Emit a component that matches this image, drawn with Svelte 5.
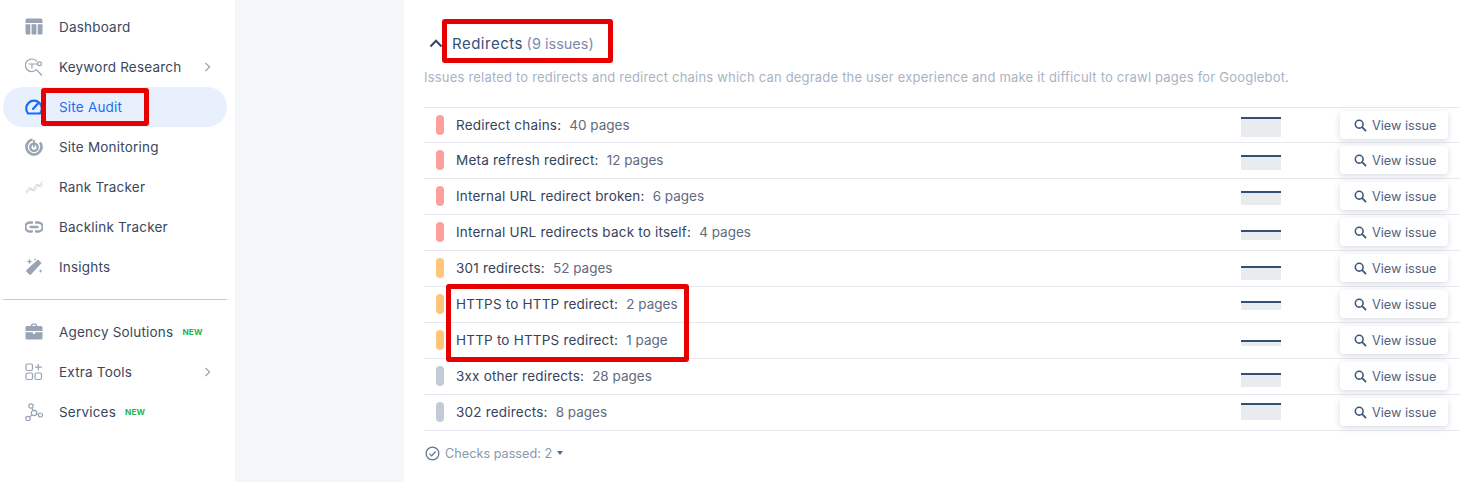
<script lang="ts">
  const topNav = [
    { name: "Dashboard", icon: "dashboard" },
    { name: "Keyword Research", icon: "keyword", more: true },
    { name: "Site Audit", icon: "audit", active: true },
    { name: "Site Monitoring", icon: "monitor" },
    { name: "Rank Tracker", icon: "rank" },
    { name: "Backlink Tracker", icon: "link" },
    { name: "Insights", icon: "wand" },
  ];
  const bottomNav = [
    { name: "Agency Solutions", icon: "case", isNew: true },
    { name: "Extra Tools", icon: "tools", more: true },
    { name: "Services", icon: "nodes", isNew: true },
  ];

  // top / height of the little trend block are relative to the row
  const issues = [
    { label: "Redirect chains:", count: "40 pages", level: "red", top: 9, h: 20 },
    { label: "Meta refresh redirect:", count: "12 pages", level: "red", top: 12, h: 15 },
    { label: "Internal URL redirect broken:", count: "6 pages", level: "red", top: 12, h: 14 },
    { label: "Internal URL redirects back to itself:", count: "4 pages", level: "red", top: 15, h: 10 },
    { label: "301 redirects:", count: "52 pages", level: "orange", top: 15, h: 14 },
    { label: "HTTPS to HTTP redirect:", count: "2 pages", level: "orange", top: 14, h: 9 },
    { label: "HTTP to HTTPS redirect:", count: "1 page", level: "orange", top: 17, h: 6 },
    { label: "3xx other redirects:", count: "28 pages", level: "gray", top: 14, h: 14 },
    { label: "302 redirects:", count: "8 pages", level: "gray", top: 8, h: 17 },
  ];
</script>

{#snippet navIcon(kind: string)}
  <svg class="nav-icon" viewBox="0 0 18 18" width="18" height="18" aria-hidden="true">
    {#if kind === "dashboard"}
      <path fill="currentColor" d="M2 0.5h14a1.5 1.5 0 0 1 1.5 1.5v3H0.5V2A1.5 1.5 0 0 1 2 0.5ZM0.5 6.3h4.8v10.2H2A1.5 1.5 0 0 1 0.5 15ZM6.6 6.3h4.8v10.2H6.6ZM12.7 6.3h4.8V15a1.5 1.5 0 0 1-1.5 1.5h-3.3Z" />
    {:else if kind === "keyword"}
      <g fill="none" stroke="currentColor" stroke-width="1.2" stroke-linecap="round">
        <path d="M11.5 3.2A6.3 6.3 0 1 0 11.3 11.6L16.5 17" />
        <path d="M4 6h8M7 6v4" />
        <circle cx="14.5" cy="5.8" r="1.9" />
      </g>
    {:else if kind === "audit"}
      <g fill="none" stroke="currentColor" stroke-width="2.2" stroke-linecap="round" stroke-linejoin="round">
        <path d="M3 15.5A7.8 7.8 0 1 1 15 15.5Z" />
        <path d="M8 11l4.500-5" />
      </g>
    {:else if kind === "monitor"}
      <g fill="none" stroke="currentColor">
        <path stroke-width="2.600" d="M7.500 1.600A7.500 7.500 0 1 0 15 4.500" />
        <circle cx="9" cy="9.300" r="3.700" stroke-width="2.400" />
        <path stroke-width="1.800" d="M9 9.300V2" />
      </g>
    {:else if kind === "rank"}
      <g class="rank-lines" fill="none" stroke="currentColor" stroke-width="0.900" stroke-linejoin="round">
        <path d="M0.500 14l4-4.500 3.500 2 4-5.500 2.500 1.500 3-4" />
        <path d="M1.500 15.500l4-4.500 3.500 2 4-5.500 2.500 1.500 2-3" />
      </g>
    {:else if kind === "link"}
      <g fill="none" stroke="currentColor" stroke-width="2.300" stroke-linecap="round">
        <path d="M7 4.500H4.800a4.500 4.500 0 0 0 0 9H7M11 4.500h2.200a4.500 4.500 0 0 1 0 9H11M5.500 9h7" />
      </g>
    {:else if kind === "wand"}
      <path fill="currentColor" d="M13 1.500l3.600 3.600L6 16.500a1.200 1.200 0 0 1-1.700 0l-2.800-2.800a1.200 1.200 0 0 1 0-1.700ZM4.500 .5l.8 2.200 2.200.8-2.200.8-.8 2.200-.8-2.200L1.500 3.500l2.200-.8ZM10 0l.4 1 1 .4-1 .4-.4 1-.4-1-1-.4 1-.4ZM15.500 11l.6 1.400 1.400.6-1.400.6-.6 1.400-.6-1.400-1.400-.6 1.400-.6Z" />
    {:else if kind === "case"}
      <path fill="currentColor" d="M6 3V2a1.500 1.500 0 0 1 1.500-1.500h3A1.500 1.500 0 0 1 12 2v1h4a1.500 1.500 0 0 1 1.500 1.500V8H0.500V4.500A1.500 1.500 0 0 1 2 3ZM7.300 3h3.400V1.800H7.300ZM0.500 9.300H8V11h2V9.300h7.500V15a1.500 1.500 0 0 1-1.500 1.500H2A1.500 1.500 0 0 1 0.500 15Z" />
    {:else if kind === "tools"}
      <g fill="none" stroke="currentColor" stroke-width="1.200">
        <rect x="1" y="1" width="6.500" height="6.500" rx="1.500" />
        <rect x="1" y="10" width="6.500" height="6.500" rx="1.500" />
        <rect x="10" y="10" width="6.500" height="6.500" rx="1.500" />
        <path d="M13.300 1v6.500M10 4.200h6.800" />
      </g>
    {:else}
      <g fill="none" stroke="currentColor" stroke-width="1.200">
        <circle cx="6" cy="3" r="2.200" />
        <circle cx="9" cy="10" r="2.700" />
        <circle cx="15.500" cy="12" r="2" />
        <circle cx="3" cy="15.500" r="2.200" />
        <path d="M7 5l1 2.400M11.600 10.800l2 .6M7 12l-2.500 2" />
      </g>
    {/if}
  </svg>
{/snippet}

{#snippet navRow(item: any)}
  <a class="nav-item" class:active={item.active} href="#top">
    {@render navIcon(item.icon)}
    <span class="nav-name">{item.name}</span>
    {#if item.isNew}<span class="new-tag">NEW</span>{/if}
    {#if item.more}
      <svg class="chevron" viewBox="0 0 8 12" width="7" height="10" aria-hidden="true">
        <path d="M1.500 1l5 5-5 5" fill="none" stroke="currentColor" stroke-width="1.300" />
      </svg>
    {/if}
  </a>
{/snippet}

<div class="shell">
  <aside class="sidebar">
    <nav class="nav-group">
      {#each topNav as item}
        {@render navRow(item)}
      {/each}
    </nav>
    <hr class="divider" />
    <nav class="nav-group">
      {#each bottomNav as item}
        {@render navRow(item)}
      {/each}
    </nav>
  </aside>

  <div class="gutter"></div>

  <main class="panel">
    <header class="section-head">
      <svg class="collapse" viewBox="0 0 14 9" width="14" height="9" aria-hidden="true">
        <path d="M1.500 7.500L7 1.800l5.500 5.700" fill="none" stroke="#2f4a6d" stroke-width="2" />
      </svg>
      <h2>Redirects <span>(9 issues)</span></h2>
    </header>
    <p class="section-desc">
      Issues related to redirects and redirect chains which can degrade the user experience and make it difficult to crawl pages for Googlebot.
    </p>

    <ul class="issues">
      {#each issues as issue}
        <li class="issue">
          <span class="level {issue.level}"></span>
          <span class="issue-label">{issue.label}</span>
          <span class="issue-count">{issue.count}</span>
          <span class="trend" style="margin-top: {issue.top}px; height: {issue.h}px"></span>
          <button type="button" class="view-btn">
            <svg viewBox="0 0 14 14" width="13" height="13" aria-hidden="true">
              <circle cx="5.600" cy="5.600" r="4.200" fill="none" stroke="currentColor" stroke-width="1.700" />
              <path d="M8.800 8.800L13 13" stroke="currentColor" stroke-width="1.900" />
            </svg>
            View issue
          </button>
        </li>
      {/each}
    </ul>

    <div class="checks">
      <svg viewBox="0 0 16 16" width="15" height="15" aria-hidden="true">
        <circle cx="8" cy="8" r="6.800" fill="none" stroke="#5f7291" stroke-width="1.300" />
        <path d="M4.800 8.200l2.300 2.300 4.200-4.600" fill="none" stroke="#5f7291" stroke-width="1.300" />
      </svg>
      <span>Checks passed: 2</span>
      <i class="caret"></i>
    </div>

    <div class="mark mark-title"></div>
    <div class="mark mark-rows"></div>
  </main>

  <div class="mark mark-nav"></div>
</div>

<style>
  :global(body) {
    margin: 0;
    background: #fff;
  }

  .shell {
    position: relative;
    display: flex;
    height: 482px;
    font-family: Inter, "Noto Sans", sans-serif;
    font-size: 13.500px;
    letter-spacing: 0.200px;
    color: #36435a;
    overflow: hidden;
  }

  .sidebar {
    width: 235px;
    flex-shrink: 0;
    box-sizing: border-box;
    padding: 7px 8px 0 3px;
    background: #fff;
  }

  .nav-group {
    display: flex;
    flex-direction: column;
  }

  .nav-item {
    display: flex;
    align-items: center;
    height: 40px;
    padding-left: 22px;
    padding-right: 16px;
    border-radius: 20px;
    color: #3b475c;
    text-decoration: none;
  }

  .nav-item.active {
    background: #e8f0fd;
    color: #1a6cf5;
  }

  .nav-icon {
    flex-shrink: 0;
    margin-right: 16px;
    color: #98a3b3;
  }

  .rank-lines {
    color: #c6ccd5;
  }

  .nav-item.active .nav-icon {
    color: #1a6cf5;
  }

  .chevron {
    margin-left: auto;
    color: #8f9aab;
  }

  .new-tag {
    margin-left: 9px;
    font-size: 8.200px;
    font-weight: 700;
    color: #1fb54a;
  }

  .divider {
    margin: 12px 0 12px;
    border: none;
    border-top: 1px solid #c6ccd6;
  }

  .gutter {
    width: 169px;
    flex-shrink: 0;
    background: #f4f6fa;
  }

  .panel {
    position: relative;
    flex: 1;
    min-width: 0;
    padding: 0 16px 0 20px;
    background: #fff;
  }

  .section-head {
    display: flex;
    align-items: center;
    height: 32px;
    margin-top: 27px;
    padding-left: 5px;
  }

  .section-head h2 {
    margin: 0 0 0 9px;
    font-size: 15px;
    font-weight: 400;
    letter-spacing: 0.500px;
    color: #35507a;
  }

  .section-head h2 span {
    margin-left: -1px;
    font-size: 14.500px;
    letter-spacing: 0;
    color: #7d8aa8;
  }

  .section-desc {
    margin: 2px 0 0;
    height: 34px;
    line-height: 32px;
    font-size: 13px;
    color: #a9b3c4;
    white-space: nowrap;
  }

  .issues {
    margin: 12px 0 0;
    padding: 0;
    list-style: none;
    border-top: 1px solid #e8e9f0;
  }

  .issue {
    display: flex;
    align-items: center;
    height: 34px;
    padding-left: 12px;
    padding-bottom: 1px;
    border-bottom: 1px solid #e8e9f0;
  }

  .issue:first-child {
    padding-bottom: 0;
  }

  .level {
    width: 8px;
    height: 20px;
    flex-shrink: 0;
    margin-right: 12px;
    border-radius: 4px;
  }

  .level.red {
    background: #fd9f9b;
  }

  .level.orange {
    background: #fec67a;
  }

  .level.gray {
    background: #c2cad6;
  }

  .issue-label {
    margin-right: 8px;
  }

  .issue-count {
    letter-spacing: 0;
    color: #5f6b80;
  }

  .trend {
    align-self: flex-start;
    box-sizing: border-box;
    width: 40px;
    margin-left: auto;
    background: #e9ecef;
    border-top: 2px solid #344f75;
  }

  .view-btn {
    display: flex;
    align-items: center;
    gap: 5px;
    box-sizing: border-box;
    width: 108px;
    height: 28px;
    margin-left: 59px;
    margin-right: 12px;
    padding: 0 0 0 14px;
    border: none;
    border-radius: 4px;
    background: #fff;
    box-shadow: 0 2px 6px rgba(40, 60, 90, 0.18);
    font: inherit;
    font-size: 12.700px;
    color: #50617f;
    cursor: pointer;
  }

  .view-btn svg {
    color: #3f5578;
  }

  .checks {
    display: flex;
    align-items: center;
    gap: 5px;
    height: 44px;
    padding-left: 1px;
    font-size: 12.700px;
    letter-spacing: 0;
    color: #8a97ad;
  }

  .caret {
    margin-left: 0;
    border-left: 3.500px solid transparent;
    border-right: 3.500px solid transparent;
    border-top: 4px solid #4a6fa5;
  }

  /* red annotation boxes drawn over the screenshot */
  .mark {
    position: absolute;
    box-sizing: border-box;
    border: 5px solid #e60000;
    border-radius: 3px;
    pointer-events: none;
  }

  .mark-title {
    left: 38px;
    top: 19px;
    width: 171px;
    height: 44px;
  }

  .mark-rows {
    left: 42px;
    top: 284px;
    width: 243px;
    height: 78px;
  }

  .mark-nav {
    left: 41px;
    top: 88px;
    width: 108px;
    height: 38px;
  }
</style>
